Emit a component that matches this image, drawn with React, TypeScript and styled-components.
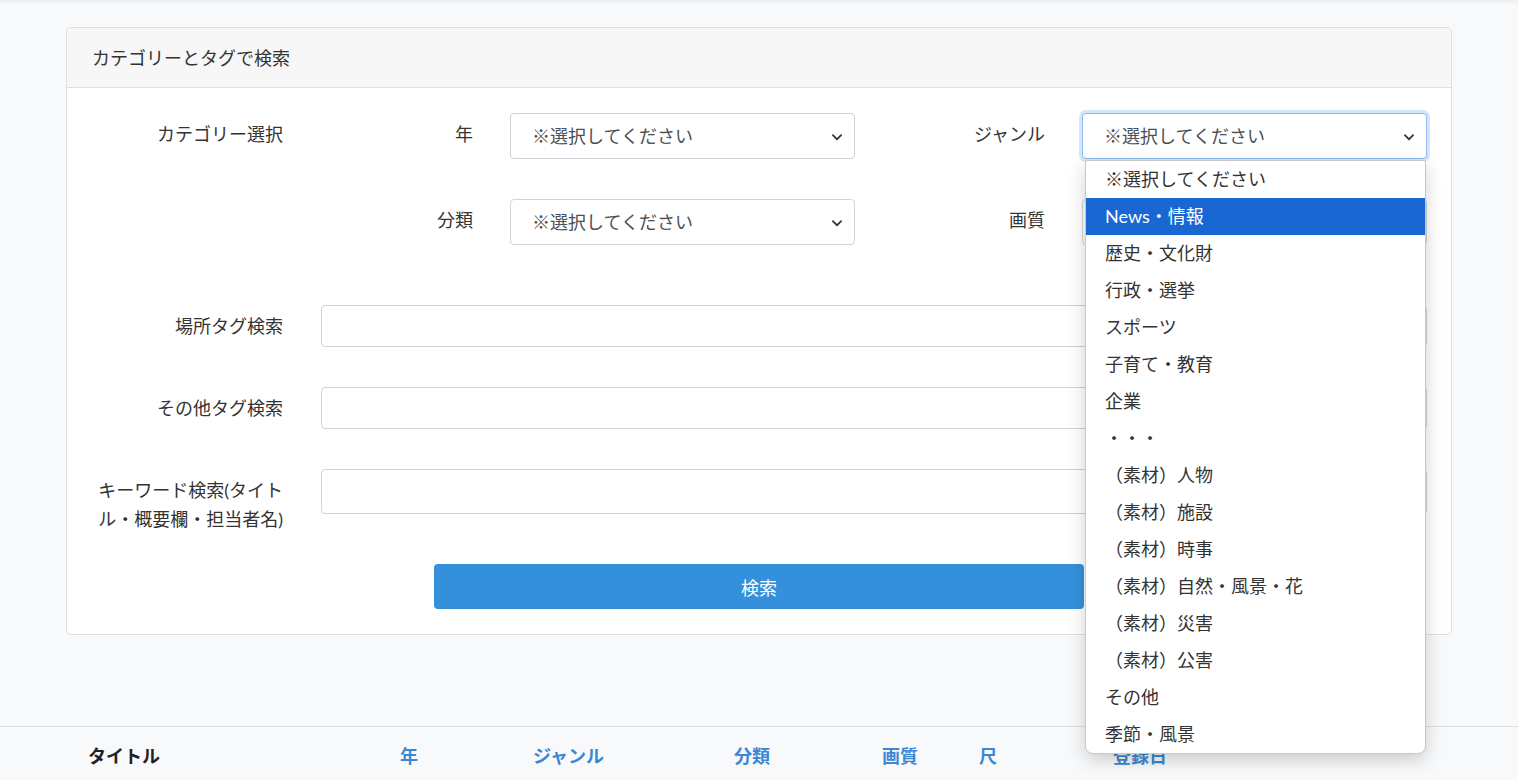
import React from 'react';
import styled, {createGlobalStyle} from 'styled-components';

const fontStack = `"Lato", "Noto Sans CJK JP", sans-serif`;

const colors = {
    page: '#f8f9fb',
    text: '#333333',
    field: '#495057',
    border: '#ced4da',
    cardBorder: '#dedfe0',
    headerBg: '#f7f7f7',
    primary: '#3590dc',
    link: '#3a88d3',
    highlight: '#1967d2',
};

const GlobalStyle = createGlobalStyle`
    html, body {
        margin: 0;
        padding: 0;
    }

    body {
        font-family: ${fontStack};
        font-size: 18px;
        color: ${colors.text};
        background: linear-gradient(#eceef0, ${colors.page} 5px);
        background-color: ${colors.page};
        min-height: 780px;
        overflow: hidden;
    }

    * {
        box-sizing: border-box;
    }
`;

const Page = styled.div`
    padding-top: 27px;
`;

const Container = styled.div`
    margin: 0 66px;
`;

const Card = styled.section`
    background: #fff;
    border: 1px solid ${colors.cardBorder};
    border-radius: 5px;
`;

const CardHeader = styled.header`
    background: ${colors.headerBg};
    border-bottom: 1px solid ${colors.cardBorder};
    border-radius: 5px 5px 0 0;
    padding: 16px 25px 14px;
    font-size: 18px;
    line-height: 29px;
`;

const CardBody = styled.div`
    padding: 25px 24px 25px;
    display: flex;
    flex-direction: column;
`;

const CategoryGrid = styled.div`
    display: grid;
    grid-template-columns: 192px 153px 345px 1fr 345px;
    column-gap: 37px;
    row-gap: 40px;
    align-items: start;
`;

const FieldRow = styled.div<{ $top: number }>`
    display: grid;
    grid-template-columns: 192px 1fr;
    column-gap: 38px;
    align-items: start;
    margin-top: ${p => p.$top}px;
`;

const Label = styled.label`
    display: block;
    text-align: right;
    font-size: 18px;
    line-height: 29px;
    padding-top: 7px;
    color: ${colors.text};
`;

const SelectWrap = styled.div`
    position: relative;
`;

const Select = styled.select<{ $focused?: boolean }>`
    appearance: none;
    width: 100%;
    height: 46px;
    padding: 0 40px 0 21px;
    font-family: ${fontStack};
    font-size: 18px;
    color: ${colors.field};
    background: #fff;
    border: 1px solid ${p => p.$focused ? '#8dbaf2' : colors.border};
    border-radius: 4px;
    box-shadow: ${p => p.$focused ? '0 0 0 3px rgba(13, 110, 253, 0.18)' : 'none'};
    outline: none;
`;

const Chevron = styled.svg`
    position: absolute;
    right: 12px;
    top: 50%;
    width: 12px;
    height: 12px;
    margin-top: -5px;
    pointer-events: none;
`;

const TextInput = styled.input<{ $height: number }>`
    width: 100%;
    height: ${p => p.$height}px;
    padding: 0 16px;
    font-family: ${fontStack};
    font-size: 18px;
    color: ${colors.field};
    background: #fff;
    border: 1px solid ${colors.border};
    border-radius: 4px;
    outline: none;
`;

const SearchButton = styled.button`
    display: block;
    width: 650px;
    height: 45px;
    margin: 30px auto 0;
    border: none;
    border-radius: 4px;
    background: ${colors.primary};
    color: #fff;
    font-family: ${fontStack};
    font-size: 18px;
`;

const Listbox = styled.ul`
    position: absolute;
    top: calc(100% + 1px);
    left: 3px;
    right: 1px;
    margin: 0;
    padding: 0;
    list-style: none;
    background: #fff;
    border: 1px solid #c8c8c8;
    border-radius: 2px 2px 8px 8px;
    box-shadow: 0 6px 18px rgba(0, 0, 0, 0.18);
    z-index: 10;
    overflow: hidden;
`;

const Option = styled.li<{ $active?: boolean }>`
    height: 37px;
    line-height: 37px;
    padding-left: 19px;
    font-size: 18px;
    white-space: nowrap;
    color: ${p => p.$active ? '#fff' : colors.text};
    background: ${p => p.$active ? colors.highlight : 'transparent'};
`;

const TableHead = styled.div`
    margin-top: 91px;
    border-top: 1px solid #dcdee0;
    display: grid;
    grid-template-columns: 312px 133px 201px 148px 97px 134px 1fr;
    padding: 15px 0 0 88px;
`;

const HeadCell = styled.div<{ $sortable?: boolean }>`
    font-size: 18px;
    font-weight: 700;
    line-height: 28px;
    color: ${p => p.$sortable ? colors.link : '#222'};
`;

const genres = [
    '※選択してください',
    'News・情報',
    '歴史・文化財',
    '行政・選挙',
    'スポーツ',
    '子育て・教育',
    '企業',
    '・・・',
    '（素材）人物',
    '（素材）施設',
    '（素材）時事',
    '（素材）自然・風景・花',
    '（素材）災害',
    '（素材）公害',
    'その他',
    '季節・風景',
];

const ChevronIcon = () => (
    <Chevron viewBox="0 0 16 16">
        <path fill="none" stroke="#343a40" strokeWidth="2.4" strokeLinecap="round" strokeLinejoin="round"
              d="M2.5 5.5l5.5 5.5 5.5-5.5"/>
    </Chevron>
);

const PlainSelect: React.FC<{ focused?: boolean; children?: React.ReactNode }> = ({focused, children}) => (
    <SelectWrap>
        <Select $focused={focused} defaultValue="">
            <option value="">※選択してください</option>
        </Select>
        <ChevronIcon/>
        {children}
    </SelectWrap>
);

const App: React.FC = () => {
    return (
        <>
            <GlobalStyle/>
            <Page>
                <Container>
                    <Card>
                        <CardHeader>カテゴリーとタグで検索</CardHeader>
                        <CardBody>
                            <CategoryGrid>
                                <Label>カテゴリー選択</Label>
                                <Label>年</Label>
                                <PlainSelect/>
                                <Label>ジャンル</Label>
                                <PlainSelect focused>
                                    <Listbox role="listbox">
                                        {genres.map((g, i) => (
                                            <Option key={g} $active={i === 1}>{g}</Option>
                                        ))}
                                    </Listbox>
                                </PlainSelect>

                                <div/>
                                <Label>分類</Label>
                                <PlainSelect/>
                                <Label>画質</Label>
                                <PlainSelect/>
                            </CategoryGrid>

                            <FieldRow $top={60}>
                                <Label>場所タグ検索</Label>
                                <TextInput $height={42}/>
                            </FieldRow>
                            <FieldRow $top={40}>
                                <Label>その他タグ検索</Label>
                                <TextInput $height={42}/>
                            </FieldRow>
                            <FieldRow $top={40}>
                                <Label>キーワード検索(タイトル・概要欄・担当者名)</Label>
                                <TextInput $height={45}/>
                            </FieldRow>

                            <SearchButton>検索</SearchButton>
                        </CardBody>
                    </Card>
                </Container>

                <TableHead>
                    <HeadCell>タイトル</HeadCell>
                    <HeadCell $sortable>年</HeadCell>
                    <HeadCell $sortable>ジャンル</HeadCell>
                    <HeadCell $sortable>分類</HeadCell>
                    <HeadCell $sortable>画質</HeadCell>
                    <HeadCell $sortable>尺</HeadCell>
                    <HeadCell $sortable>登録日</HeadCell>
                </TableHead>
            </Page>
        </>
    );
};

export default App;
